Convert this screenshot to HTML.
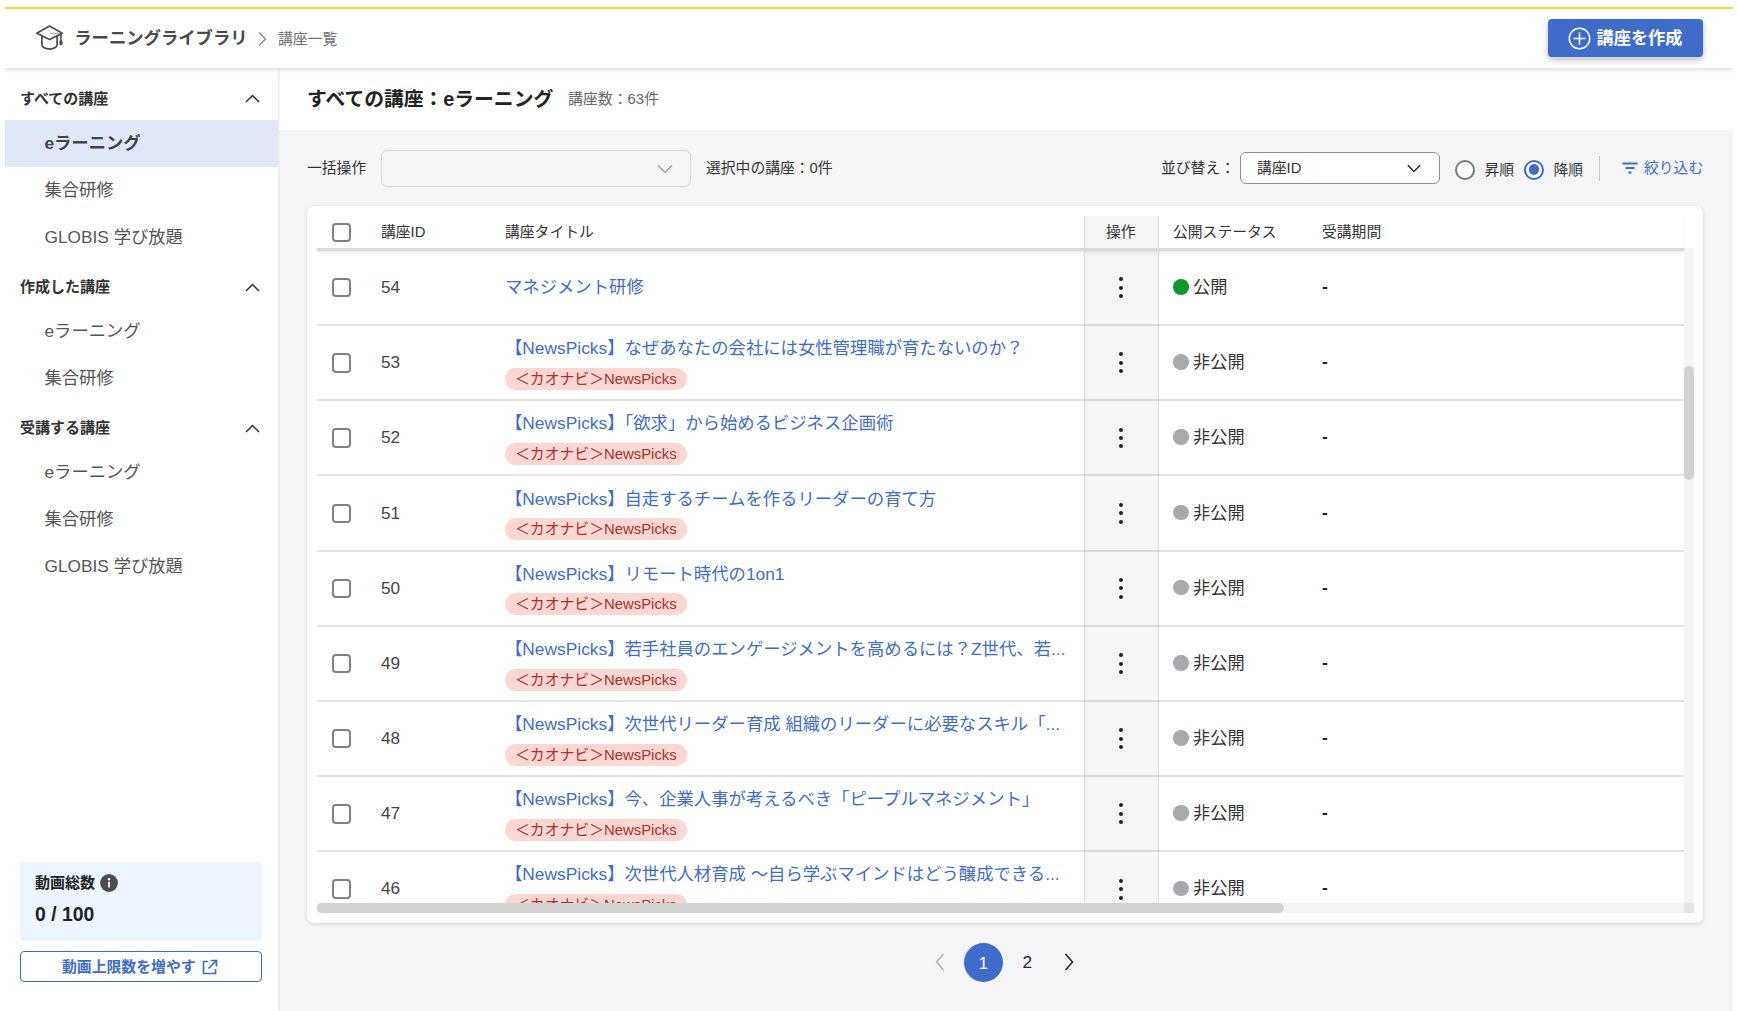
<!DOCTYPE html>
<html lang="ja">
<head>
<meta charset="utf-8">
<title>ラーニングライブラリ 講座一覧</title>
<style>
*{box-sizing:border-box;margin:0;padding:0}
html,body{width:1737px;height:1011px;overflow:hidden;background:#fff}
body{font-family:"Liberation Sans","Noto Sans CJK JP",sans-serif;color:#333;position:relative;-webkit-font-smoothing:antialiased}
.abs{position:absolute}
#topline{left:5px;top:7px;width:1728px;height:2px;background:#f6d83c}
#header{left:5px;top:9px;width:1728px;height:59px;background:#fff;box-shadow:0 2px 4px rgba(0,0,0,.12);clip-path:inset(0 0 -10px 0);z-index:5}
#header .logo{left:30px;top:15px;width:30px;height:28px}
#header .ttl{left:69.2px;top:0;height:59px;line-height:59px;font-size:17.35px;font-weight:700;color:#4a4a4a;white-space:nowrap}
#header .sep{left:252px;top:22px;width:10px;height:16px}
#header .crumb{left:273px;top:0;height:59px;line-height:60px;font-size:14.8px;color:#707070;white-space:nowrap}
#create{left:1547.5px;top:19px;width:155.5px;height:38px;background:#3f6ccb;border-radius:4px;box-shadow:0 3px 6px rgba(0,0,0,.25);color:#fff;font-weight:700;font-size:17.2px;z-index:6;white-space:nowrap}
#create svg{position:absolute;left:20px;top:8px}
#create span{position:absolute;left:49px;top:0;line-height:38px}

#side{left:5px;top:68px;width:273px;height:943px;background:#fff;box-shadow:1px 0 2px rgba(0,0,0,.10);z-index:3}
.sec{position:absolute;left:15px;font-size:15px;font-weight:700;color:#333;white-space:nowrap;height:24px;line-height:24px}
.chev{position:absolute;left:240px;width:15px;height:9px}
.itm{position:absolute;left:0;width:273px;height:47px;line-height:46px;padding-left:39.5px;font-size:17.3px;color:#555;white-space:nowrap}
.itm.on{background:#e0e8f8;font-weight:700;color:#444}
#vbox{left:15px;top:794px;width:242px;height:79px;background:#edf5ff;border-radius:4px}
#vbox .l{position:absolute;left:15px;top:10px;font-size:15px;font-weight:700;color:#222;line-height:22px;white-space:nowrap}
#vbox .n{position:absolute;left:15px;top:38px;font-size:19.4px;font-weight:700;color:#222;line-height:28px;white-space:nowrap}
#vbox svg{position:absolute;left:80px;top:12px}
#vbtn{left:15px;top:882.5px;width:242px;height:31.5px;border:1px solid #3f6ccb;border-radius:4px;background:#fff;color:#3f6ccb;font-weight:700;font-size:14.85px;line-height:30px;white-space:nowrap}
#vbtn span{position:absolute;left:41px;top:0}
#vbtn svg{position:absolute;left:180px;top:7px}

#main{left:279px;top:68px;width:1454px;height:943px;background:#f5f5f7}
#tbar{left:0;top:0;width:1454px;height:62px;background:#fff}
#tbar h1{position:absolute;left:28px;top:0;line-height:62px;font-size:19.8px;font-weight:700;color:#222;white-space:nowrap}
#tbar .cnt{position:absolute;left:289px;top:0;line-height:62px;font-size:14.9px;color:#666;white-space:nowrap}
.t15{position:absolute;font-size:14.8px;color:#333;white-space:nowrap;line-height:22px}
#sel1{left:102px;top:82px;width:309.5px;height:36.5px;border:1px solid #d6d6d8;border-radius:6px;background:#f5f5f7}
#sel2{left:961px;top:84px;width:199.5px;height:32px;border:1px solid #8e8e8e;border-radius:6px;background:#fff}
.radio{position:absolute;width:20px;height:20px;border-radius:50%;border:2px solid #7a7a7a;background:#fff}
.radio.on{border-color:#3f6ccb}
.radio.on::after{content:"";position:absolute;left:2.8px;top:2.8px;right:2.8px;bottom:2.8px;border-radius:50%;background:#3f6ccb}
#vdiv{left:1319.5px;top:88px;width:1px;height:25px;background:#c8c8c8}

#card{left:28px;top:138px;width:1396px;height:717px;background:#fff;border-radius:7px;box-shadow:0 1px 4px rgba(0,0,0,.14)}
#tbl{left:10px;top:10px;width:1376.5px;height:697px;overflow:hidden}
#thead{left:0;top:0;width:1367px;height:35px;z-index:2;background:#fff;border-bottom:3px solid #d9d9d9;box-shadow:0 2px 3px rgba(0,0,0,.07)}
.th{position:absolute;top:0;line-height:32.5px;font-size:14.8px;color:#333;white-space:nowrap}
.opcol{position:absolute;left:767px;width:75px;background:#f5f5f7;border-left:1px solid #dcdcdc;border-right:1px solid #dcdcdc}
.cb{position:absolute;left:15px;width:19.4px;height:19.4px;border:2px solid #808085;border-radius:4px;background:#fff}
.row{position:absolute;left:0;width:1367px;height:75.17px}
.ln{position:absolute;left:0;width:1367px;height:2px;background:rgba(0,0,0,.11)}
.row .id{position:absolute;left:64px;top:0;line-height:74px;font-size:17.2px;color:#444}
.row .lk{position:absolute;left:188px;top:11px;line-height:24px;font-size:17.35px;color:#3f6ccb;white-space:nowrap}
.row .lk.one{top:25px}
.row .tag{position:absolute;left:188px;top:42.8px;height:22px;line-height:22.5px;border-radius:11px;background:#fcd6d3;color:#a5322b;font-size:14.85px;padding:0 10px;white-space:nowrap}
.row .dots{position:absolute;left:802.5px;top:27.6px;width:4px;height:22px}
.row .dots i{position:absolute;left:-0.2px;width:4px;height:4px;border-radius:50%;background:#222}
.row .st{position:absolute;left:856px;top:0;line-height:74px;font-size:17.2px;color:#333;white-space:nowrap}
.row .st::before{content:"";position:absolute;left:0;top:29.2px;width:15.6px;height:15.6px;border-radius:50%;background:#a9a9ad}
.row .st.pub::before{background:#11972f}
.row .st span{padding-left:20px}
.row .pr{position:absolute;left:1005px;top:0;line-height:72.5px;font-size:17.2px;color:#222;font-weight:700}
#vtrack{left:1367px;top:32px;width:9.5px;height:655px;background:#f5f5f5}
#vthumb{left:1367px;top:150px;width:9.5px;height:114px;border-radius:5px;background:#d2d2d2}
#htrack{left:0;top:687px;width:1376.5px;height:10px;background:#f3f3f3;z-index:3}
#hthumb{left:0;top:687px;width:967px;height:10px;border-radius:5px;background:#d2d2d2;z-index:4}
#corner{left:1367px;top:687px;width:9.5px;height:10px;background:#e4e4e4;z-index:4}
#pg{left:0;top:873px;width:1454px;height:42px}
#pg .cur{position:absolute;left:684.5px;top:1.5px;width:39.6px;height:39.6px;border-radius:50%;background:#3f6ccb;color:#fff;text-align:center;line-height:40.5px;font-size:17.2px}
#pg .p2{position:absolute;left:743.5px;top:0;line-height:43px;font-size:17.2px;color:#222}
</style>
</head>
<body>
<div id="topline" class="abs"></div>
<div id="header" class="abs">
  <svg class="abs logo" viewBox="0 0 30 28" fill="none" stroke="#4c4c50" stroke-width="1.7" stroke-linejoin="round" stroke-linecap="round"><path d="M1.8 9.300 L14.5 2 L27.300 9.300 L14.5 15.600 Z"/><path d="M6.900 12.200 V20.5 C6.900 23.300 10.5 25.100 14.5 25.100 C18.5 25.100 22.100 23.300 22.100 20.5 V12.200"/><path d="M15.200 9.300 H26.5" stroke="#a0a0a4" stroke-width="1"/><path d="M25.900 9.800 V14"/><path d="M25.900 13.5 C25.200 15.5 24.300 17.5 24.300 19 C24.300 20.300 25 21.100 26 21.100 C27 21.100 27.700 20.300 27.700 19 C27.700 17.5 26.600 15.5 25.900 13.500 Z" fill="#4c4c50" stroke="none"/></svg>
  <div class="abs ttl">ラーニングライブラリ</div>
  <svg class="abs sep" viewBox="0 0 10 16" fill="none" stroke="#888" stroke-width="1.3"><path d="M2 1.5 L8.500 8 L2 14.5"/></svg>
  <div class="abs crumb">講座一覧</div>
</div>
<div id="create" class="abs"><svg width="23" height="23" viewBox="0 0 23 23" fill="none" stroke="#fff" stroke-width="1.5"><circle cx="11.5" cy="11.5" r="10.200"/><path d="M11.5 5.500 V17.5 M5.500 11.5 H17.5"/></svg><span>講座を作成</span></div>

<div id="side" class="abs">
  <div class="sec" style="top:19px">すべての講座</div>
  <svg class="chev" style="top:26.2px" viewBox="0 0 15 9" fill="none" stroke="#333" stroke-width="1.5"><path d="M1 8 L7.500 1.5 L14 8"/></svg>
  <div class="itm on" style="top:52px">eラーニング</div>
  <div class="itm" style="top:98.8px">集合研修</div>
  <div class="itm" style="top:146px">GLOBIS 学び放題</div>
  <div class="sec" style="top:207px">作成した講座</div>
  <svg class="chev" style="top:215px" viewBox="0 0 15 9" fill="none" stroke="#333" stroke-width="1.5"><path d="M1 8 L7.500 1.5 L14 8"/></svg>
  <div class="itm" style="top:240px">eラーニング</div>
  <div class="itm" style="top:287px">集合研修</div>
  <div class="sec" style="top:348px">受講する講座</div>
  <svg class="chev" style="top:356px" viewBox="0 0 15 9" fill="none" stroke="#333" stroke-width="1.5"><path d="M1 8 L7.500 1.5 L14 8"/></svg>
  <div class="itm" style="top:381px">eラーニング</div>
  <div class="itm" style="top:428px">集合研修</div>
  <div class="itm" style="top:475px">GLOBIS 学び放題</div>
  <div id="vbox" class="abs"><div class="l">動画総数</div><svg width="18" height="18" viewBox="0 0 18 18"><circle cx="9" cy="9" r="8.900" fill="#4d4d50"/><rect x="8" y="7.800" width="2" height="5.500" fill="#fff"/><circle cx="9" cy="5.200" r="1.200" fill="#fff"/></svg><div class="n">0 / 100</div></div>
  <div id="vbtn" class="abs"><span>動画上限数を増やす</span><svg width="17" height="17" viewBox="0 0 17 17" fill="none" stroke="#3f6ccb" stroke-width="1.700"><path d="M7 2.500 H2.500 V14.5 H14.5 V10"/><path d="M9.500 1.500 H15.5 V7.500 M15.5 1.500 L7.500 9.500"/></svg></div>
</div>

<div id="main" class="abs">
  <div id="tbar" class="abs"><h1>すべての講座：eラーニング</h1><div class="cnt">講座数：63件</div></div>
  <div class="t15" style="left:28px;top:89px">一括操作</div>
  <div id="sel1" class="abs"><svg class="abs" style="left:274.5px;top:12.5px" width="16" height="10" viewBox="0 0 16 10" fill="none" stroke="#999" stroke-width="1.200"><path d="M1 1.500 L8 8.500 L15 1.500"/></svg></div>
  <div class="t15" style="left:427px;top:89px">選択中の講座：0件</div>
  <div class="t15" style="left:882px;top:89px">並び替え：</div>
  <div id="sel2" class="abs"><div class="t15" style="left:16px;top:4px">講座ID</div><svg class="abs" style="left:166px;top:11px" width="14" height="8.8" viewBox="0 0 16 10" fill="none" stroke="#333" stroke-width="1.700"><path d="M1 1.500 L8 8.500 L15 1.500"/></svg></div>
  <div class="radio" style="left:1176px;top:91.7px"></div>
  <div class="t15" style="left:1205.5px;top:90.6px">昇順</div>
  <div class="radio on" style="left:1245px;top:91.7px"></div>
  <div class="t15" style="left:1274.5px;top:90.6px">降順</div>
  <div id="vdiv" class="abs"></div>
  <svg class="abs" style="left:1343px;top:93.6px" width="16" height="12" viewBox="0 0 16 12" fill="none" stroke="#3f6ccb" stroke-width="1.900"><path d="M0.500 1.500 H15.5 M3.500 6 H12.5 M6.500 10.5 H9.500"/></svg>
  <div class="t15" style="left:1365px;top:89px;color:#3f6ccb">絞り込む</div>

  <div id="card" class="abs">
    <div id="tbl" class="abs">
      <div id="thead" class="abs">
        <div class="cb" style="top:6.5px"></div>
        <div class="th" style="left:64px">講座ID</div>
        <div class="th" style="left:188px">講座タイトル</div>
        <div class="opcol" style="top:0;height:32px"></div>
        <div class="th" style="left:789px">操作</div>
        <div class="th" style="left:856px">公開ステータス</div>
        <div class="th" style="left:1005px">受講期間</div>
      </div>
      <div id="rows" class="abs" style="left:0;top:34px;width:1367px;height:653px;overflow:hidden">
        <div class="opcol" style="top:0;height:655px"></div>
        <div class="ln" style="top:74px"></div>
        <div class="row" style="top:0.0px"><div class="cb" style="top:28px"></div><div class="id">54</div><div class="lk one">マネジメント研修</div><div class="dots"><i style="top:-0.4px"></i><i style="top:8.1px"></i><i style="top:16.6px"></i></div><div class="st pub"><span>公開</span></div><div class="pr">-</div></div>
        <div class="ln" style="top:149px"></div>
        <div class="row" style="top:75.2px"><div class="cb" style="top:28px"></div><div class="id">53</div><div class="lk">【NewsPicks】なぜあなたの会社には女性管理職が育たないのか？</div><div class="tag">＜カオナビ＞NewsPicks</div><div class="dots"><i style="top:-0.4px"></i><i style="top:8.1px"></i><i style="top:16.6px"></i></div><div class="st"><span>非公開</span></div><div class="pr">-</div></div>
        <div class="ln" style="top:224px"></div>
        <div class="row" style="top:150.3px"><div class="cb" style="top:28px"></div><div class="id">52</div><div class="lk">【NewsPicks】「欲求」から始めるビジネス企画術</div><div class="tag">＜カオナビ＞NewsPicks</div><div class="dots"><i style="top:-0.4px"></i><i style="top:8.1px"></i><i style="top:16.6px"></i></div><div class="st"><span>非公開</span></div><div class="pr">-</div></div>
        <div class="ln" style="top:300px"></div>
        <div class="row" style="top:225.5px"><div class="cb" style="top:28px"></div><div class="id">51</div><div class="lk">【NewsPicks】自走するチームを作るリーダーの育て方</div><div class="tag">＜カオナビ＞NewsPicks</div><div class="dots"><i style="top:-0.4px"></i><i style="top:8.1px"></i><i style="top:16.6px"></i></div><div class="st"><span>非公開</span></div><div class="pr">-</div></div>
        <div class="ln" style="top:375px"></div>
        <div class="row" style="top:300.7px"><div class="cb" style="top:28px"></div><div class="id">50</div><div class="lk">【NewsPicks】リモート時代の1on1</div><div class="tag">＜カオナビ＞NewsPicks</div><div class="dots"><i style="top:-0.4px"></i><i style="top:8.1px"></i><i style="top:16.6px"></i></div><div class="st"><span>非公開</span></div><div class="pr">-</div></div>
        <div class="ln" style="top:450px"></div>
        <div class="row" style="top:375.9px"><div class="cb" style="top:28px"></div><div class="id">49</div><div class="lk">【NewsPicks】若手社員のエンゲージメントを高めるには？Z世代、若...</div><div class="tag">＜カオナビ＞NewsPicks</div><div class="dots"><i style="top:-0.4px"></i><i style="top:8.1px"></i><i style="top:16.6px"></i></div><div class="st"><span>非公開</span></div><div class="pr">-</div></div>
        <div class="ln" style="top:525px"></div>
        <div class="row" style="top:451.0px"><div class="cb" style="top:28px"></div><div class="id">48</div><div class="lk">【NewsPicks】次世代リーダー育成 組織のリーダーに必要なスキル「...</div><div class="tag">＜カオナビ＞NewsPicks</div><div class="dots"><i style="top:-0.4px"></i><i style="top:8.1px"></i><i style="top:16.6px"></i></div><div class="st"><span>非公開</span></div><div class="pr">-</div></div>
        <div class="ln" style="top:600px"></div>
        <div class="row" style="top:526.2px"><div class="cb" style="top:28px"></div><div class="id">47</div><div class="lk">【NewsPicks】今、企業人事が考えるべき「ピープルマネジメント」</div><div class="tag">＜カオナビ＞NewsPicks</div><div class="dots"><i style="top:-0.4px"></i><i style="top:8.1px"></i><i style="top:16.6px"></i></div><div class="st"><span>非公開</span></div><div class="pr">-</div></div>
        <div class="ln" style="top:675px"></div>
        <div class="row" style="top:601.4px"><div class="cb" style="top:28px"></div><div class="id">46</div><div class="lk">【NewsPicks】次世代人材育成 ～自ら学ぶマインドはどう醸成できる...</div><div class="tag">＜カオナビ＞NewsPicks</div><div class="dots"><i style="top:-0.4px"></i><i style="top:8.1px"></i><i style="top:16.6px"></i></div><div class="st"><span>非公開</span></div><div class="pr">-</div></div>
      </div>
      <div id="vtrack" class="abs"></div><div id="vthumb" class="abs"></div>
      <div id="htrack" class="abs"></div><div id="hthumb" class="abs"></div><div id="corner" class="abs"></div>
    </div>
  </div>
  <div id="pg" class="abs">
    <svg class="abs" style="left:656px;top:12px" width="10" height="18" viewBox="0 0 10 18" fill="none" stroke="#aaa" stroke-width="1.300"><path d="M8.500 1 L1.500 9 L8.500 17"/></svg>
    <div class="cur">1</div><div class="p2">2</div>
    <svg class="abs" style="left:785px;top:12px" width="10" height="18" viewBox="0 0 10 18" fill="none" stroke="#222" stroke-width="1.500"><path d="M1.500 1 L8.500 9 L1.500 17"/></svg>
  </div>
</div>
</body>
</html>
